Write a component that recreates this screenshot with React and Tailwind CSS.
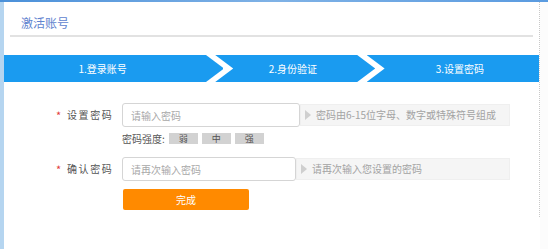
import React from "react";

const font = { fontFamily: '"Noto Sans CJK SC", "Noto Sans", sans-serif' };

function Hint({ children, width }) {
  return (
    <div className={`flex items-center h-[22px] bg-[#f5f5f5] border border-[#efefef] ${width}`}>
      <span className="ml-[4px] w-0 h-0 border-y-[5px] border-y-transparent border-l-[6px] border-l-[#cfcfcf]" />
      <span className="ml-[5px] text-[10px] text-[#a3a3a3] leading-none">{children}</span>
    </div>
  );
}

function Label({ children }) {
  return (
    <div className="flex items-center shrink-0">
      <span className="ml-[52px] w-[11px] text-[11px] text-[#e23b3b] leading-none">*</span>
      <span className="w-[55px] text-[10px] text-[#555] tracking-[1.6px] leading-none">{children}</span>
    </div>
  );
}

export default function App() {
  return (
    <div className="w-[548px] h-[249px] bg-white overflow-hidden flex flex-col" style={font}>
      <div className="h-[2px] bg-gradient-to-r from-[#4a90d9] via-[#7fb2e6] to-[#5a9be0] shrink-0" />
      <div className="flex flex-1">
        <div className="w-[4px] bg-[#b5d5f0] shrink-0" />
        <div className="w-[535px] flex flex-col">
          <div className="h-[33px] pl-[17px] pt-[9px] text-[12px] text-[#5f84cf] leading-none flex items-center">
            激活账号
          </div>
          <div className="ml-[6px] w-[523px] h-[2px] bg-[#e2e2e2]" />
          <div className="mt-[18px] flex h-[27px] text-white text-[10px]">
            <div className="w-[220px] bg-[#1a9bf0] flex items-center justify-center [clip-path:polygon(0_0,202px_0,220px_50%,202px_100%,0_100%)]">
              <span className="mr-[22px]">1.登录账号</span>
            </div>
            <div className="-ml-[8px] w-[160px] bg-[#1a9bf0] flex items-center justify-center [clip-path:polygon(0_0,142px_0,160px_50%,142px_100%,0_100%,18px_50%)]">
              <span className="mr-[4px]">2.身份验证</span>
            </div>
            <div className="-ml-[8px] w-[173px] bg-[#1a9bf0] flex items-center justify-center [clip-path:polygon(0_0,100%_0,100%_100%,0_100%,18px_50%)]">
              <span className="ml-[14px]">3.设置密码</span>
            </div>
          </div>

          <div className="mt-[21px] flex items-center h-[24px]">
            <Label>设置密码</Label>
            <div className="w-[178px] h-[24px] border border-[#d5d5d5] rounded-[3px] flex items-center pl-[8px] text-[10px] text-[#a8a8a8] bg-white">
              请输入密码
            </div>
            <Hint width="w-[210px]">密码由6-15位字母、数字或特殊符号组成</Hint>
          </div>

          <div className="mt-[3px] ml-[118px] flex items-center h-[16px] text-[10px] text-[#555]">
            <span className="mr-[4px]">密码强度:</span>
            <span className="w-[29px] h-[11px] bg-[#d2d2d2] text-[9px] text-[#555] flex items-center justify-center leading-none">弱</span>
            <span className="ml-[4px] w-[29px] h-[11px] bg-[#d2d2d2] text-[9px] text-[#555] flex items-center justify-center leading-none">中</span>
            <span className="ml-[4px] w-[29px] h-[11px] bg-[#d2d2d2] text-[9px] text-[#555] flex items-center justify-center leading-none">强</span>
          </div>

          <div className="mt-[11px] flex items-center h-[24px]">
            <Label>确认密码</Label>
            <div className="w-[174px] h-[24px] border border-[#d5d5d5] rounded-[3px] flex items-center pl-[8px] text-[10px] text-[#a8a8a8] bg-white">
              请再次输入密码
            </div>
            <Hint width="w-[214px]">请再次输入您设置的密码</Hint>
          </div>

          <div className="mt-[8px] ml-[119px] w-[126px] h-[21px] bg-[#ff8a00] rounded-[2px] flex items-center justify-center text-[10px] text-white">
            完成
          </div>
        </div>
        <div className="w-[1px] h-[215px] border-l border-dotted border-[#c8c8c8]" />
        <div className="flex-1 bg-[#fcfcfc]" />
      </div>
    </div>
  );
}
